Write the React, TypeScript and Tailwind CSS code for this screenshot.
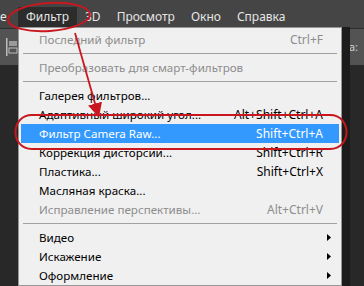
import React from 'react';

type Item = {
  label: string;
  shortcut?: string;
  disabled?: boolean;
  active?: boolean;
  submenu?: boolean;
};

const groups: Item[][] = [
  [{ label: 'Последний фильтр', shortcut: 'Ctrl+F', disabled: true }],
  [{ label: 'Преобразовать для смарт-фильтров', disabled: true }],
  [
    { label: 'Галерея фильтров...' },
    { label: 'Адаптивный широкий угол...', shortcut: 'Alt+Shift+Ctrl+A' },
    { label: 'Фильтр Camera Raw...', shortcut: 'Shift+Ctrl+A', active: true },
    { label: 'Коррекция дисторсии...', shortcut: 'Shift+Ctrl+R' },
    { label: 'Пластика...', shortcut: 'Shift+Ctrl+X' },
    { label: 'Масляная краска...' },
    { label: 'Исправление перспективы...', shortcut: 'Alt+Ctrl+V', disabled: true },
  ],
  [
    { label: 'Видео', submenu: true },
    { label: 'Искажение', submenu: true },
    { label: 'Оформление', submenu: true },
  ],
];

const topMenu = ['Фильтр', '3D', 'Просмотр', 'Окно', 'Справка'];

function MenuRow({ item }: { item: Item }) {
  const color = item.active
    ? 'text-white'
    : item.disabled
      ? 'text-[#8d8d8d]'
      : 'text-black';
  return (
    <div
      className={`mx-[2px] flex h-[19px] items-center pl-[18px] pr-[16px] ${color} ${
        item.active ? 'bg-[#3399ff]' : ''
      }`}
    >
      <span className="flex-1 whitespace-nowrap text-[11.6px]">{item.label}</span>
      {item.shortcut && <span className="whitespace-nowrap">{item.shortcut}</span>}
      {item.submenu && (
        <svg width="4" height="7" viewBox="0 0 4 7" className="mr-[-8px]">
          <path d="M0 0 L4 3.5 L0 7 Z" fill="#000" />
        </svg>
      )}
    </div>
  );
}

export default function App() {
  return (
    <div
      className="relative h-[286px] w-[364px] overflow-hidden bg-[#282828] text-[12px]"
      style={{ fontFamily: '"Noto Sans", "DejaVu Sans", sans-serif' }}
    >
      {/* menu bar */}
      <div className="flex h-[28px] items-center bg-[#454545] pt-[6px] text-[12px] text-[#e6e6e6]">
        <span className="w-[18px] leading-[20px]">е</span>
        {topMenu.map((m, i) => (
          <span
            key={m}
            className={`px-[8px] leading-[20px] ${i === 0 ? 'bg-[#2c2c2c]' : ''}`}
          >
            {m}
          </span>
        ))}
      </div>
      {/* options bar */}
      <div className="flex h-[37px] items-center border-t border-[#2e2e2e] bg-[#535353] px-[6px]">
        <svg width="12" height="18" viewBox="0 0 12 18">
          <rect x="0" y="0" width="1.5" height="18" fill="#bdbdbd" />
          <rect x="3" y="3" width="8" height="5" fill="#9a9a9a" />
          <rect x="3" y="10" width="8" height="5" fill="none" stroke="#bdbdbd" />
        </svg>
        <span className="ml-auto text-[11px] text-[#d0d0d0]">ма:</span>
      </div>

      {/* dropdown */}
      <div className="absolute left-[18px] top-[27px] w-[324px] border border-[#979797] bg-[#f0f0f0] pt-[2px] shadow-[8px_0_0_#1c1c1c]">
        {groups.map((g, gi) => (
          <div key={gi}>
            {gi > 0 && <div className="mx-[4px] my-[4px] h-[1px] bg-[#a0a0a0]" />}
            {g.map((it) => (
              <MenuRow key={it.label} item={it} />
            ))}
          </div>
        ))}
      </div>

      {/* annotations */}
      <svg className="absolute left-0 top-0" width="364" height="286" viewBox="0 0 364 286">
        <defs>
          <marker id="ah" markerWidth="8" markerHeight="8" refX="6" refY="4" orient="auto">
            <path d="M0 0 L8 4 L0 8 Z" fill="#c8171e" />
          </marker>
        </defs>
        <ellipse
          cx="49"
          cy="17"
          rx="41"
          ry="14"
          transform="rotate(-4 49 17)"
          fill="none"
          stroke="#c8171e"
          strokeWidth="2"
        />
        <line x1="75" y1="33" x2="98" y2="114" stroke="#c8171e" strokeWidth="1.8" markerEnd="url(#ah)" />
        <path
          d="M32 115 L330 115 C352 115 352 149 330 149 L32 149 C10 149 10 115 32 115 Z"
          fill="none"
          stroke="#c8171e"
          strokeWidth="2"
        />
      </svg>
    </div>
  );
}
